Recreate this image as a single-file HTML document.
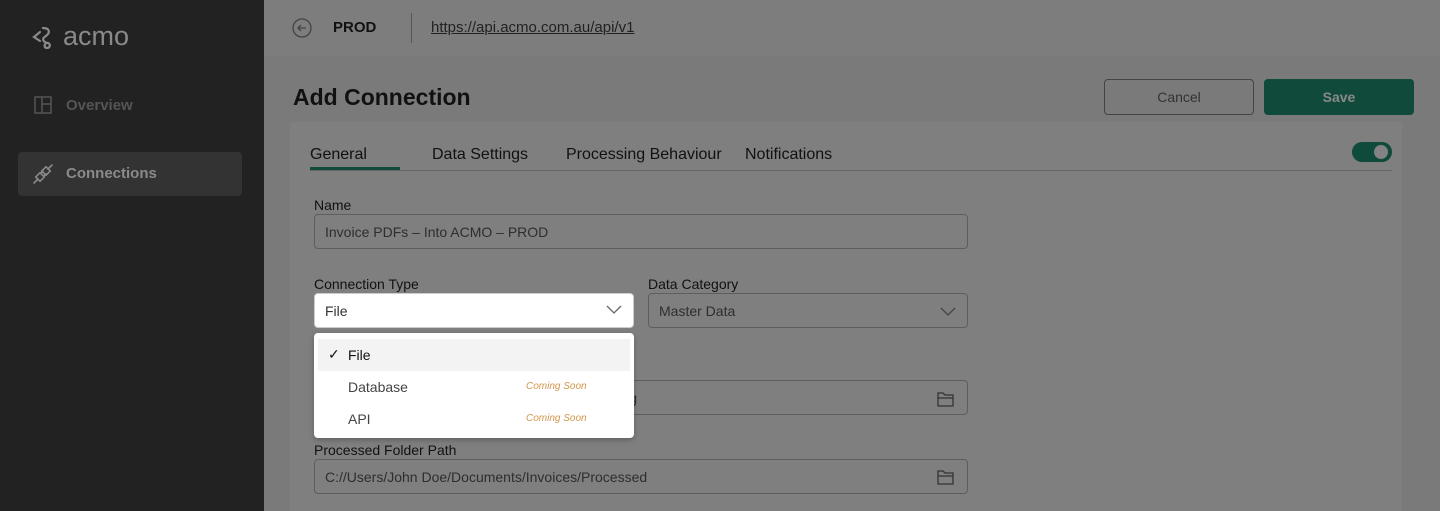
<!DOCTYPE html>
<html><head><meta charset="utf-8"><style>
*{box-sizing:border-box;margin:0;padding:0}
html,body{width:1440px;height:511px;overflow:hidden}
body{font-family:"Liberation Sans",sans-serif;background:#7a7a7a;position:relative}
.sb{position:absolute;left:0;top:0;width:264px;height:511px;background:#222}
.abs{position:absolute}
.hdr{position:absolute;left:264px;top:0;width:1176px;height:56px;background:#7d7d7d}
.card{position:absolute;left:290px;top:122px;width:1112px;height:389px;background:#7f7f7f}
.lbl{position:absolute;font-size:14px;color:#111}
.inp{position:absolute;height:35px;border:1px solid #5e5e5e;border-radius:4px;font-size:14px;color:#2e2e2e;padding:9px 10px}
.tab{position:absolute;top:146px;font-size:16px;color:#111}
</style></head><body>
<div class="sb">
 <svg class="abs" style="left:31px;top:24px" width="26" height="26" viewBox="0 0 26 26" fill="none" stroke="#8a8a8a" stroke-width="2.2" stroke-linecap="round"><path d="M9 8 L3 13 L9 17"/><path d="M12 4 C18 4 20 8 15 12 C10 15 12 18 17 19 C20 20 19 24 16 24 C13 24 13 21 15 19"/></svg>
 <div class="abs" style="left:63px;top:21px;font-size:27px;color:#8a8a8a">acmo</div>
 <svg class="abs" style="left:34px;top:96px" width="18" height="18" viewBox="0 0 18 18" fill="none" stroke="#555" stroke-width="1.5"><rect x="1" y="1" width="16" height="16"/><path d="M8 1V17M8 8H17"/></svg>
 <div class="abs" style="left:66px;top:97px;font-size:15px;color:#555;font-weight:bold">Overview</div>
 <div class="abs" style="left:18px;top:152px;width:224px;height:44px;background:#333;border-radius:4px"></div>
 <svg class="abs" style="left:32px;top:163px" width="22" height="22" viewBox="0 0 22 22" fill="none" stroke="#8a8a8a" stroke-width="1.6" stroke-linecap="round"><path d="M2 20L6 16M16 6L20 2"/><rect x="5" y="11" width="6" height="6" transform="rotate(-45 8 14)"/><rect x="11" y="5" width="6" height="6" transform="rotate(-45 14 8)"/><path d="M9 10l2-2M12 13l2-2"/></svg>
 <div class="abs" style="left:66px;top:165px;font-size:15px;color:#8a8a8a;font-weight:bold">Connections</div>
</div>
<div class="hdr">
 <svg class="abs" style="left:28px;top:18px" width="20" height="20" viewBox="0 0 20 20" fill="none" stroke="#444" stroke-width="1.3"><circle cx="10" cy="10" r="9"/><path d="M14 10H6M9 7l-3 3 3 3"/></svg>
 <div class="abs" style="left:69px;top:19px;font-size:15px;font-weight:bold;color:#111">PROD</div>
 <div class="abs" style="left:147px;top:13px;width:1px;height:30px;background:#555"></div>
 <div class="abs" style="left:167px;top:19px;font-size:15px;color:#222;text-decoration:underline">https://api.acmo.com.au/api/v1</div>
</div>
<div class="abs" style="left:293px;top:84px;font-size:23px;font-weight:bold;color:#111">Add Connection</div>
<div class="abs" style="left:1104px;top:79px;width:150px;height:36px;border:1px solid #444;border-radius:4px;text-align:center;line-height:34px;font-size:14px;color:#333">Cancel</div>
<div class="abs" style="left:1264px;top:79px;width:150px;height:36px;background:#0f4a3a;border-radius:4px;text-align:center;line-height:36px;font-size:14px;font-weight:bold;color:#8a8a8a">Save</div>
<div class="card"></div>
<div class="tab" style="left:310px">General</div>
<div class="tab" style="left:432px">Data Settings</div>
<div class="tab" style="left:566px">Processing Behaviour</div>
<div class="tab" style="left:745px">Notifications</div>
<div class="abs" style="left:310px;top:170px;width:1082px;height:1px;background:#666"></div>
<div class="abs" style="left:310px;top:167px;width:90px;height:3px;background:#0f4a3a"></div>
<div class="abs" style="left:1352px;top:142px;width:40px;height:20px;border-radius:10px;background:#0f4a3a"></div>
<div class="abs" style="left:1374px;top:145px;width:14px;height:14px;border-radius:7px;background:#838383"></div>
<div class="lbl" style="left:314px;top:197px">Name</div>
<div class="inp" style="left:314px;top:214px;width:654px">Invoice PDFs – Into ACMO – PROD</div>
<div class="lbl" style="left:314px;top:276px">Connection Type</div>
<div class="inp" style="left:314px;top:293px;width:320px;background:#fff;border-color:#ccc;color:#333">File</div>
<svg class="abs" style="left:606px;top:305px" width="16" height="10" viewBox="0 0 16 10" fill="none" stroke="#666" stroke-width="1.3"><path d="M1 1l7 7 7-7"/></svg>
<div class="lbl" style="left:648px;top:276px">Data Category</div>
<div class="inp" style="left:648px;top:293px;width:320px">Master Data</div>
<svg class="abs" style="left:940px;top:307px" width="16" height="10" viewBox="0 0 16 10" fill="none" stroke="#444" stroke-width="1.3"><path d="M1 1l7 7 7-7"/></svg>
<div class="inp" style="left:314px;top:380px;width:654px;text-align:right;padding-right:330px">g</div>
<svg class="abs" style="left:936px;top:390px" width="20" height="18" viewBox="0 0 20 18" fill="none" stroke="#333" stroke-width="1.3"><path d="M2 3h5l2 2h8v11H2z M2 8h15"/></svg>
<div class="lbl" style="left:314px;top:442px">Processed Folder Path</div>
<div class="inp" style="left:314px;top:459px;width:654px">C://Users/John Doe/Documents/Invoices/Processed</div>
<svg class="abs" style="left:936px;top:468px" width="20" height="18" viewBox="0 0 20 18" fill="none" stroke="#333" stroke-width="1.3"><path d="M2 3h5l2 2h8v11H2z M2 8h15"/></svg>
<div class="abs" style="left:314px;top:333px;width:320px;height:105px;background:#fff;border-radius:4px;box-shadow:0 2px 6px rgba(0,0,0,.25)">
 <div class="abs" style="left:4px;top:6px;width:312px;height:32px;background:#f3f3f3"></div>
 <div class="abs" style="left:14px;top:13px;font-size:14px;color:#111">✓</div>
 <div class="abs" style="left:34px;top:14px;font-size:14px;color:#111">File</div>
 <div class="abs" style="left:34px;top:46px;font-size:14px;color:#444">Database</div>
 <div class="abs" style="left:212px;top:48px;font-size:10px;font-style:italic;color:#d4954a">Coming Soon</div>
 <div class="abs" style="left:34px;top:78px;font-size:14px;color:#444">API</div>
 <div class="abs" style="left:212px;top:80px;font-size:10px;font-style:italic;color:#d4954a">Coming Soon</div>
</div>
</body></html>
